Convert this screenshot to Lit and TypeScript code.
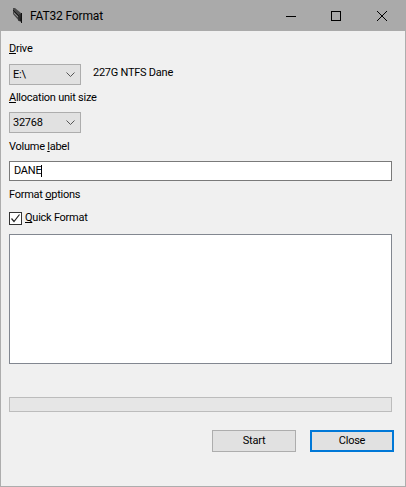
import { LitElement, html, css } from "lit";
import { customElement } from "lit/decorators.js";

@customElement("app-root")
export class AppRoot extends LitElement {
  static styles = css`
    :host { display: block; width: 406px; height: 487px; }
    * { box-sizing: border-box; }
    .win { width: 406px; height: 487px; display: flex; flex-direction: column; background: #f0f0f0; border: solid #adadad; border-width: 0 1px 1px 1px; font: 11px/16px Roboto, sans-serif; letter-spacing: -0.25px; color: #000; }
    .title { margin: 0 -1px; height: 31px; flex: none; background: #aaaaaa; display: flex; align-items: center; padding: 0 1px 0 12px; }
    .title .ico { width: 12px; height: 16px; margin-right: 6px; flex: none; }
    .title .name { font-size: 12px; letter-spacing: -0.15px; flex: 1; }
    .cap { width: 46px; height: 31px; display: flex; align-items: center; justify-content: center; }
    .cap.min { width: 44px; }
    .cap svg { display: block; }
    .body { flex: 1; display: flex; flex-direction: column; padding: 9px 0 0 8px; }
    .lbl { height: 16px; line-height: 18px; }
    u { text-underline-offset: 1px; }
    .row { display: flex; align-items: center; margin-top: 8px; height: 21px; }
    .sel { width: 72px; height: 21px; background: #e1e1e1; border: 1px solid #adadad; display: flex; align-items: center; justify-content: space-between; padding: 0 5px 0 3px; }
    .sel span { line-height: 18px; }
    .info { margin: 0 0 3px 12px; }
    .gap4 { margin-top: 4px; }
    .gap7 { margin-top: 7px; }
    .gap5 { margin-top: 5px; }
    .input { width: 383px; height: 20px; margin-top: 7px; background: #fff; border: 1px solid #7a7a7a; padding-left: 4px; display: flex; align-items: center; }
    .caret { width: 1px; height: 12px; background: #000; }
    .chk { display: flex; align-items: center; margin-top: 9px; height: 14px; }
    .box { width: 13px; height: 13px; border: 1px solid #333; background: #fff; margin-right: 3px; display: flex; }
    .log { width: 383px; height: 130px; margin-top: 9px; background: #fff; border: 1px solid #828790; }
    .bar { width: 383px; height: 15px; margin-top: 33px; background: #e6e6e6; border: 1px solid #bcbcbc; }
    .btns { display: flex; justify-content: flex-end; gap: 14px; margin-top: 18px; padding-right: 11px; }
    .btn { width: 84px; height: 22px; background: #e1e1e1; border: 1px solid #adadad; display: flex; align-items: center; justify-content: center; }
    .btn.on { border: 2px solid #0078d7; }
  `;

  render() {
    return html`<div class="win">
      <div class="title">
        <svg class="ico" viewBox="0 0 12 16">
          <path d="M1 0 L3 0 L9 5 L9 14 L7 13 L1 6 Z" fill="#4a4a4a"/>
          <path d="M1 2 L7 8 L7 13 M8 6 L8.5 13" stroke="#1a1a1a" fill="none"/>
          <path d="M2 5 L6 9" stroke="#8a8a8a" fill="none"/>
          <path d="M9.5 5 L9.5 15" stroke="#111" fill="none"/>
        </svg>
        <span class="name">FAT32 Format</span>
        <div class="cap min"><svg width="10" height="10"><path d="M0 5.5H10" stroke="#000"/></svg></div>
        <div class="cap"><svg width="10" height="10"><rect x=".5" y=".5" width="9" height="9" fill="none" stroke="#000"/></svg></div>
        <div class="cap"><svg width="10" height="10"><path d="M0 0L10 10M10 0L0 10" stroke="#000"/></svg></div>
      </div>
      <div class="body">
        <div class="lbl"><u>D</u>rive</div>
        <div class="row">
          <div class="sel"><span>E:\\</span>${this.chev()}</div>
          <span class="info">227G NTFS Dane</span>
        </div>
        <div class="lbl gap4"><u>A</u>llocation unit size</div>
        <div class="row gap7"><div class="sel"><span>32768</span>${this.chev()}</div></div>
        <div class="lbl gap5">Volume <u>l</u>abel</div>
        <div class="input"><span>DANE</span><span class="caret"></span></div>
        <div class="lbl gap5">Format <u>o</u>ptions</div>
        <div class="chk">
          <div class="box"><svg width="11" height="11"><path d="M1.5 5.5L4 8.5L9.5 1.5" stroke="#222" fill="none" stroke-width="1.2"/></svg></div>
          <span><u>Q</u>uick Format</span>
        </div>
        <div class="log"></div>
        <div class="bar"></div>
        <div class="btns">
          <div class="btn">Start</div>
          <div class="btn on">Close</div>
        </div>
      </div>
    </div>`;
  }

  chev() {
    return html`<svg width="9" height="5"><path d="M0.5 0.5L4.5 4.5L8.5 0.5" stroke="#555" fill="none"/></svg>`;
  }
}
